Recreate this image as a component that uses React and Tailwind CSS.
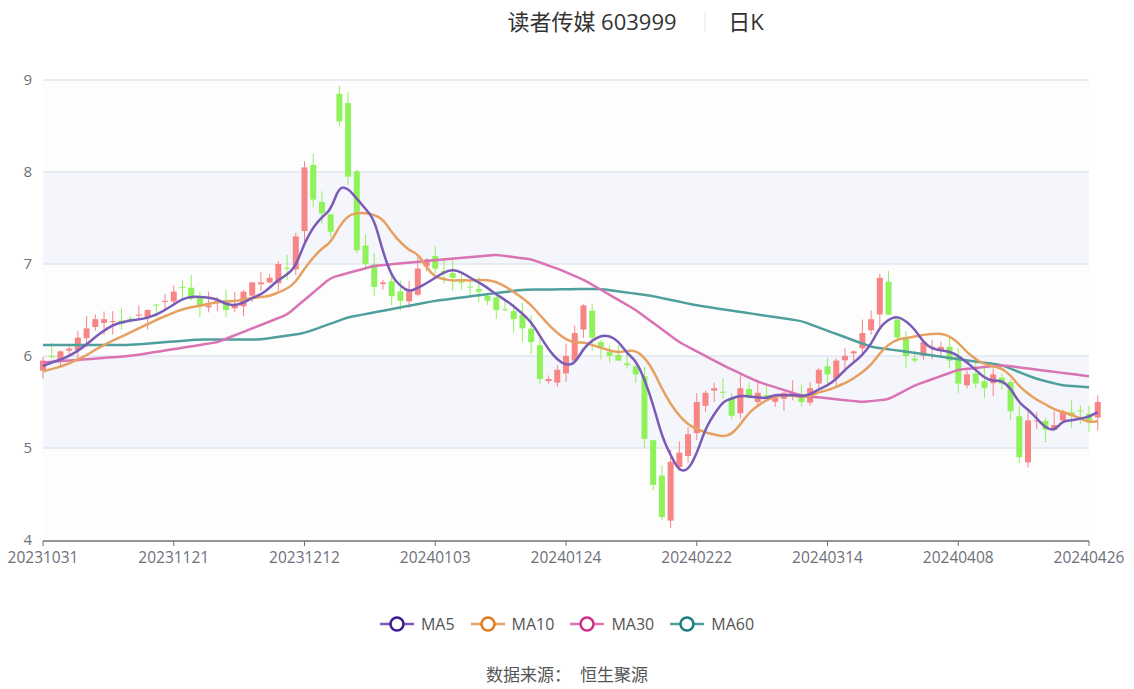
import React from "react";

const closes = [5.95,6.0,6.05,6.08,6.2,6.3,6.4,6.4,6.38,6.35,6.4,6.45,6.5,6.55,6.6,6.7,6.75,6.62,6.55,6.55,6.6,6.5,6.55,6.7,6.8,6.8,6.85,7.0,6.95,7.3,8.05,7.7,7.55,7.35,8.55,7.95,7.15,7.0,6.75,6.8,6.65,6.6,6.7,6.95,7.05,6.95,6.9,6.85,6.8,6.75,6.7,6.6,6.5,6.5,6.4,6.3,6.15,5.75,5.75,5.85,6.0,6.25,6.55,6.2,6.1,6.0,5.95,5.9,5.8,5.1,4.6,4.25,4.85,4.95,5.15,5.5,5.6,5.65,5.6,5.35,5.65,5.55,5.6,5.55,5.55,5.6,5.6,5.5,5.65,5.85,5.8,5.95,6.0,6.05,6.25,6.4,6.85,6.45,6.2,6.0,5.95,6.15,6.1,6.1,5.95,5.7,5.8,5.7,5.65,5.8,5.7,5.4,4.9,5.3,5.3,5.2,5.25,5.4,5.35,5.4,5.3,5.5];
const prefix = [5.75,5.8,5.7,5.78,5.85,5.8,5.9,5.88,5.92];
const X = (i) => 43 + i * 8.717;
const Y = (p) => 80 + (9 - p) * 92;

function rnd(i) { const s = Math.sin(i * 12.9898) * 43758.5453; return s - Math.floor(s); }

function smooth(pts) {
  let d = `M${pts[0][0]},${pts[0][1]}`;
  for (let i = 1; i < pts.length - 1; i++) {
    const mx = (pts[i][0] + pts[i + 1][0]) / 2, my = (pts[i][1] + pts[i + 1][1]) / 2;
    d += ` Q${pts[i][0]},${pts[i][1]} ${mx},${my}`;
  }
  const l = pts[pts.length - 1];
  return d + ` L${l[0]},${l[1]}`;
}
function ma(n) {
  const all = [...prefix, ...closes];
  return closes.map((_, i) => {
    const k = i + prefix.length;
    let s = 0, c = 0;
    for (let j = Math.max(0, k - n + 1); j <= k; j++) { s += all[j]; c++; }
    return [X(i), Y(s / c)];
  });
}
function interp(keys) {
  const out = [];
  for (let k = 0; k < keys.length - 1; k++) {
    const [i0, p0] = keys[k], [i1, p1] = keys[k + 1];
    for (let i = i0; i < i1; i++) out.push([X(i), Y(p0 + (p1 - p0) * (i - i0) / (i1 - i0))]);
  }
  const l = keys[keys.length - 1]; out.push([X(l[0]), Y(l[1])]);
  return out;
}
const ma30 = interp([[0,5.93],[10,6.0],[20,6.15],[28,6.45],[33,6.85],[38,6.98],[46,7.05],[52,7.1],[56,7.05],[59,6.95],[62,6.83],[68,6.5],[73,6.15],[78,5.9],[82,5.72],[87,5.57],[94,5.5],[97,5.53],[100,5.68],[105,5.85],[110,5.9],[115,5.84],[120,5.78]]);
const ma60 = interp([[0,6.12],[10,6.12],[18,6.18],[25,6.18],[30,6.25],[35,6.42],[45,6.6],[55,6.72],[64,6.73],[70,6.65],[75,6.55],[87,6.38],[95,6.1],[104,5.98],[110,5.9],[114,5.75],[117,5.68],[120,5.66]]);

const ticks = ["20231031","20231121","20231212","20240103","20240124","20240222","20240314","20240408","20240426"];

export default function App() {
  const candles = closes.map((c, i) => {
    const prev = i === 0 ? 5.9 : closes[i - 1];
    let o = prev + (rnd(i) - 0.5) * 0.12;
    if (i === 34) o = 8.85;
    if (i === 35) o = 8.75;
    if (i === 71) o = 4.7;
    const up = c >= o;
    const hi = Math.max(o, c) + rnd(i + 100) * 0.15;
    const lo = Math.min(o, c) - rnd(i + 200) * 0.15;
    const col = up ? "#f88585" : "#8ff25a";
    const x = X(i);
    const top = Y(Math.max(o, c)), bot = Y(Math.min(o, c));
    return (
      <g key={i}>
        <line x1={x} x2={x} y1={Y(hi)} y2={Y(lo)} stroke={col} strokeWidth="1" />
        <rect x={x - 3} y={top} width="6" height={Math.max(1, bot - top)} fill={col} />
      </g>
    );
  });
  const lines = [
    [ma60, "#4f9f9c"],
    [ma30, "#d973b3"],
    [ma(10), "#e6a160"],
    [ma(5), "#7a5bb8"],
  ];
  const ff = "'Open Sans','Noto Sans CJK SC',sans-serif";
  return (
    <div className="w-[1134px] h-[689px] bg-white relative" style={{ fontFamily: ff }}>
      <svg width="1134" height="590" className="block">
        <text x="592" y="30" textAnchor="middle" fontSize="22" fill="#333" fontFamily={ff}>读者传媒 603999</text>
        <line x1="705" x2="705" y1="12" y2="32" stroke="#e5e5e5" />
        <text x="746" y="30" textAnchor="middle" fontSize="22" fill="#333" fontFamily={ff}>日K</text>
        <rect x="43" y="80" width="1046" height="460" fill="#fdfdfe" />
        <rect x="43" y="172" width="1046" height="92" fill="#f5f6fb" />
        <rect x="43" y="356" width="1046" height="92" fill="#f5f6fb" />
        {[9,8,7,6,5].map((v) => (
          <g key={v}>
            <line x1="43" x2="1089" y1={Y(v)} y2={Y(v)} stroke="#e0e6f1" strokeWidth="1.5" />
            <text x="32" y={Y(v) + 5} textAnchor="end" fontSize="15" fill="#6e7079">{v}</text>
          </g>
        ))}
        <text x="32" y="545" textAnchor="end" fontSize="15" fill="#6e7079">4</text>
        {candles}
        {lines.map(([p, c], i) => (
          <path key={i} d={smooth(p)} fill="none" stroke={c} strokeWidth="2.5" />
        ))}
        <line x1="43" x2="1089" y1="541" y2="541" stroke="#6e7079" strokeWidth="1.5" />
        {ticks.map((t, i) => (
          <g key={t}>
            <line x1={43 + i * 130.75} x2={43 + i * 130.75} y1="541" y2="546" stroke="#6e7079" />
            <text x={43 + i * 130.75} y="563" textAnchor="middle" fontSize="15.5" fill="#6e7079">{t}</text>
          </g>
        ))}
      </svg>
      <div className="flex justify-center items-center gap-[16px] mt-[22px] text-[16px] text-[#555]">
        {[["MA5","#7a5bb8","#3d1d8f"],["MA10","#e6a160","#e07b1a"],["MA30","#d973b3","#cf2f8e"],["MA60","#4f9f9c","#1d7d7b"]].map(([n, l, c]) => (
          <div key={n} className="flex items-center gap-[7px]">
            <svg width="34" height="16">
              <line x1="0" x2="34" y1="8" y2="8" stroke={l} strokeWidth="2.5" />
              <circle cx="17" cy="8" r="6.5" fill="#fff" stroke={c} strokeWidth="2.5" />
            </svg>
            <span>{n}</span>
          </div>
        ))}
      </div>
      <div className="text-center text-[17px] text-[#555] mt-[26px]">数据来源：&nbsp;&nbsp;恒生聚源</div>
    </div>
  );
}
